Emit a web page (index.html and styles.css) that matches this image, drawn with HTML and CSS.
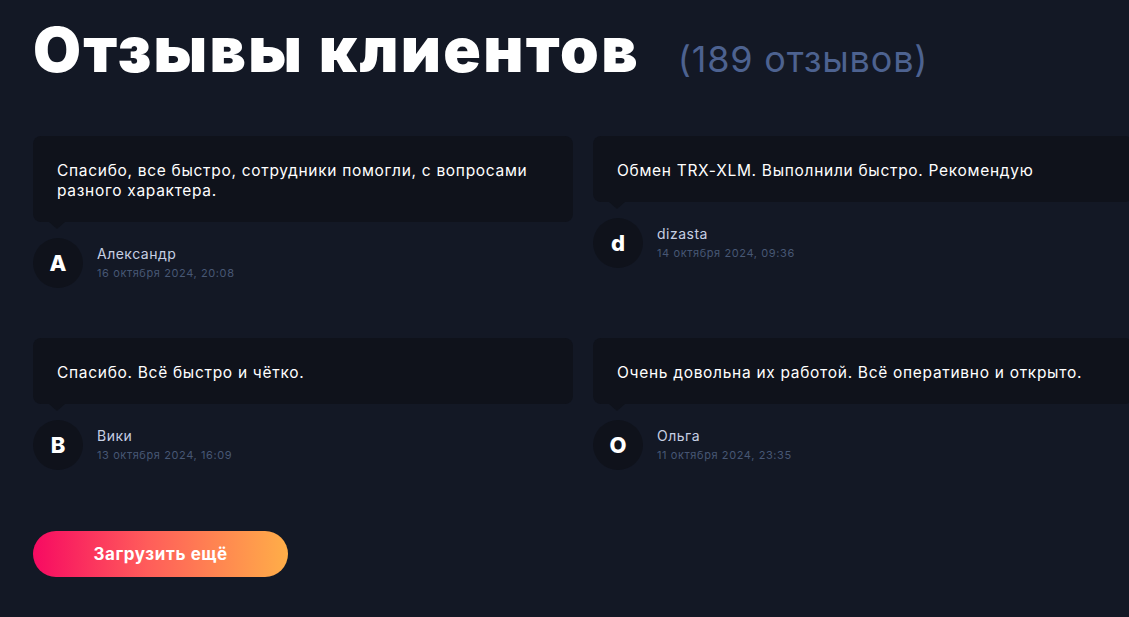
FILE: index.html
```html
<!DOCTYPE html>
<html lang="ru">
<head>
<meta charset="utf-8">
<title>Отзывы клиентов</title>
<link rel="stylesheet" href="styles.css">
</head>
<body>
<section class="reviews">
  <h1 class="title">Отзывы клиентов <span class="count">(189 отзывов)</span></h1>
  <div class="grid">
    <div class="review">
      <div class="bubble">Спасибо, все быстро, сотрудники помогли, с вопросами разного характера.</div>
      <div class="author">
        <div class="avatar">А</div>
        <div class="meta">
          <div class="name">Александр</div>
          <div class="date">16 октября 2024, 20:08</div>
        </div>
      </div>
    </div>
    <div class="review">
      <div class="bubble">Обмен TRX-XLM. Выполнили быстро. Рекомендую</div>
      <div class="author">
        <div class="avatar">d</div>
        <div class="meta">
          <div class="name">dizasta</div>
          <div class="date">14 октября 2024, 09:36</div>
        </div>
      </div>
    </div>
    <div class="review">
      <div class="bubble">Спасибо. Всё быстро и чётко.</div>
      <div class="author">
        <div class="avatar">В</div>
        <div class="meta">
          <div class="name">Вики</div>
          <div class="date">13 октября 2024, 16:09</div>
        </div>
      </div>
    </div>
    <div class="review">
      <div class="bubble">Очень довольна их работой. Всё оперативно и открыто.</div>
      <div class="author">
        <div class="avatar">О</div>
        <div class="meta">
          <div class="name">Ольга</div>
          <div class="date">11 октября 2024, 23:35</div>
        </div>
      </div>
    </div>
  </div>
  <button class="more">Загрузить ещё</button>
</section>
</body>
</html>
```
FILE: styles.css
```css
html, body {
  margin: 0;
  padding: 0;
  background: #131825;
  overflow: hidden;
}
body {
  font-family: Inter, "Noto Sans", sans-serif;
  color: #ffffff;
  width: 1129px;
  height: 617px;
}
.reviews {
  padding: 14px 0 0 33px;
}
.title {
  margin: 0;
  font-size: 62px;
  font-weight: 900;
  line-height: 72px;
  letter-spacing: 2.3px;
  display: flex;
  align-items: baseline;
  white-space: nowrap;
}
.count {
  margin-left: 38px;
  font-size: 36px;
  font-weight: 400;
  color: #4d6290;
  letter-spacing: 0.8px;
}
.grid {
  margin-top: 41px;
  display: grid;
  grid-template-columns: 540px 540px;
  column-gap: 20px;
  row-gap: 50px;
  align-items: start;
}
.bubble {
  position: relative;
  background: #0f121b;
  border-radius: 8px;
  padding: 25px 24px 21px;
  font-size: 15.5px;
  line-height: 20px;
  letter-spacing: 0.7px;
  color: #ffffff;
}
.bubble::after {
  content: "";
  position: absolute;
  left: 16px;
  bottom: -7px;
  border-left: 8px solid transparent;
  border-right: 8px solid transparent;
  border-top: 7px solid #0f121b;
}
.author {
  display: flex;
  align-items: center;
  margin-top: 16px;
}
.avatar {
  width: 50px;
  height: 50px;
  border-radius: 50%;
  background: #0f121b;
  display: flex;
  align-items: center;
  justify-content: center;
  font-size: 22px;
  font-weight: 800;
  color: #ffffff;
  flex-shrink: 0;
}
.meta {
  margin-left: 14px;
  margin-top: -1px;
}
.name {
  font-size: 14px;
  line-height: 18px;
  letter-spacing: 0.5px;
  color: #c6cfe3;
}
.date {
  margin-top: 3px;
  font-size: 11px;
  line-height: 14px;
  letter-spacing: 0.6px;
  color: #475774;
}
.more {
  margin-top: 61px;
  width: 255px;
  height: 46px;
  border: none;
  border-radius: 23px;
  background: linear-gradient(90deg, #f70a62 0%, #ff5d5a 45%, #ffae48 100%);
  color: #ffffff;
  font-family: Inter, "Noto Sans", sans-serif;
  font-size: 17px;
  font-weight: 700;
  letter-spacing: 0.6px;
  cursor: pointer;
}
```
